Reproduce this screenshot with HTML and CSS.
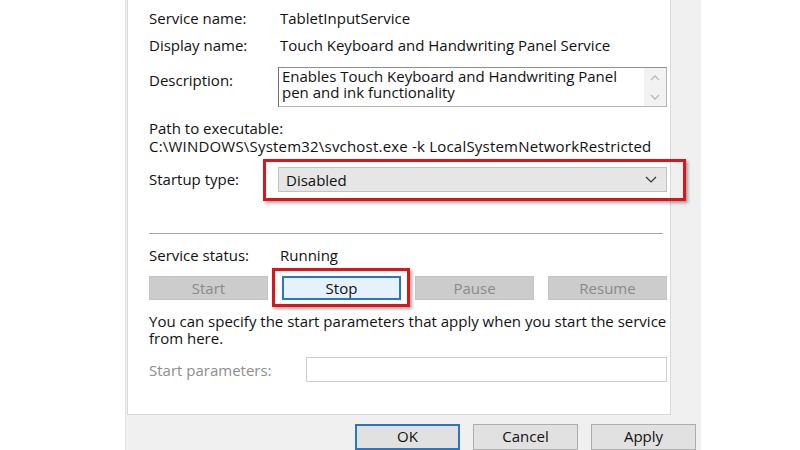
FILE: index.html
```html
<!DOCTYPE html>
<html lang="en">
<head>
    <meta charset="UTF-8">
    <title>Service Properties</title>
    <link rel="stylesheet" href="styles.css">
</head>
<body>
    <div class="dialog">
        <div class="panel">
            <div class="row">
                <span class="label">Service name:</span>
                <span>TabletInputService</span>
            </div>
            <div class="row">
                <span class="label">Display name:</span>
                <span>Touch Keyboard and Handwriting Panel Service</span>
            </div>
            <div class="row desc-row">
                <span class="label">Description:</span>
                <div class="textbox">
                    <div class="textbox-text">Enables Touch Keyboard and Handwriting Panel pen and ink functionality</div>
                    <div class="scrollbar">
                        <svg width="10" height="6" viewBox="0 0 10 6"><path d="M1 5 L5 1 L9 5" fill="none" stroke="#b8b8b8" stroke-width="1.3"/></svg>
                        <svg width="10" height="6" viewBox="0 0 10 6"><path d="M1 1 L5 5 L9 1" fill="none" stroke="#b8b8b8" stroke-width="1.3"/></svg>
                    </div>
                </div>
            </div>
            <div class="path-label">Path to executable:</div>
            <div class="path-value">C:\WINDOWS\System32\svchost.exe -k LocalSystemNetworkRestricted</div>
            <div class="row startup-row">
                <span class="label">Startup type:</span>
                <div class="dropdown">
                    <span>Disabled</span>
                    <svg width="12" height="7" viewBox="0 0 12 7"><path d="M1 1 L6 6 L11 1" fill="none" stroke="#333" stroke-width="1.2"/></svg>
                    <div class="highlight highlight-dropdown"></div>
                </div>
            </div>
            <div class="separator"></div>
            <div class="row status-row">
                <span class="label">Service status:</span>
                <span>Running</span>
            </div>
            <div class="buttons">
                <button class="btn disabled">Start</button>
                <button class="btn focused">Stop<span class="highlight highlight-stop"></span></button>
                <button class="btn disabled">Pause</button>
                <button class="btn disabled">Resume</button>
            </div>
            <p class="hint">You can specify the start parameters that apply when you start the service from here.</p>
            <div class="row params-row">
                <span class="label params-label">Start parameters:</span>
                <div class="params-input"></div>
            </div>
        </div>
        <div class="footer">
            <button class="btn footer-btn default">OK</button>
            <button class="btn footer-btn">Cancel</button>
            <button class="btn footer-btn">Apply</button>
        </div>
    </div>
</body>
</html>
```

FILE: styles.css
```css
body {
    margin: 0;
    background-color: #fff;
    font-family: "Open Sans", "Noto Sans", Arial, sans-serif;
    font-size: 15px;
    color: #111;
}
.dialog {
    margin-left: 125px;
    width: 575px;
    height: 450px;
    overflow: hidden;
    background-color: #f0f0f0;
    border-left: 1px solid #e2e2e2;
}
.panel {
    margin-left: 1px;
    width: 544px;
    height: 415px;
    padding-left: 21px;
    background-color: #fff;
    border: 1px solid #d9d9d9;
    border-top: none;
    box-sizing: border-box;
    padding-top: 4px;
}
.row {
    display: flex;
    align-items: center;
    height: 27px;
}
.label {
    width: 131px;
    flex-shrink: 0;
}
.desc-row {
    align-items: flex-start;
    height: 40px;
    margin-top: 9px;
}
.desc-row .label {
    padding-top: 3px;
}
.textbox {
    display: flex;
    width: 389px;
    height: 40px;
    margin-left: -2px;
    border: 1px solid #b5b5b5;
    border-top-color: #8f8f8f;
    border-left-color: #6f6f6f;
    box-sizing: border-box;
}
.textbox-text {
    flex: 1;
    padding: 0 20px 0 3px;
    line-height: 16px;
}
.scrollbar {
    width: 22px;
    background-color: #f2f2f2;
    display: flex;
    flex-direction: column;
    align-items: center;
    justify-content: space-around;
}
.path-label {
    margin-top: 12px;
    line-height: 18px;
}
.path-value {
    line-height: 18px;
    letter-spacing: 0.2px;
}
.startup-row {
    height: 25px;
    margin-top: 12px;
}
.startup-row .label {
    margin-top: -1px;
}
.dropdown {
    position: relative;
    display: flex;
    align-items: center;
    justify-content: space-between;
    width: 389px;
    height: 25px;
    margin-left: -2px;
    padding: 0 9px 0 7px;
    box-sizing: border-box;
    background-color: #e6e6e6;
    border: 1px solid #c2c2c2;
}
.highlight {
    position: absolute;
    border: 3px solid #d8161c;
    box-shadow: 2px 2px 3px rgba(0, 0, 0, 0.35);
    pointer-events: none;
}
.highlight-dropdown {
    left: -16px;
    right: -20px;
    top: -9px;
    bottom: -10px;
}
.separator {
    width: 514px;
    height: 1px;
    margin-top: 41px;
    background-color: #a8a8a8;
}
.status-row {
    height: 18px;
    margin-top: 12px;
}
.buttons {
    display: grid;
    grid-template-columns: repeat(4, 119px);
    column-gap: 14px;
    margin-top: 12px;
}
.btn {
    position: relative;
    height: 24px;
    font-family: inherit;
    font-size: 15px;
    color: #111;
    background-color: #e1e1e1;
    border: 1px solid #adadad;
    padding: 0;
}
.btn.disabled {
    background-color: #cccccc;
    border-color: #c4c4c4;
    color: #8a8a8a;
}
.btn.focused {
    background-color: #e5f1fb;
    border: 2px solid #2a76c0;
}
.btn.default {
    border: 2px solid #2a76c0;
}
.highlight-stop {
    left: -12px;
    right: -11px;
    top: -10px;
    bottom: -9px;
}
.hint {
    margin: 13px 0 0;
    width: 520px;
    line-height: 17px;
}
.params-row {
    height: 25px;
    margin-top: 10px;
}
.params-label {
    width: 157px;
    color: #8d8d8d;
}
.params-input {
    width: 361px;
    height: 25px;
    border: 1px solid #cfcfcf;
    box-sizing: border-box;
}
.footer {
    display: flex;
    gap: 13px;
    padding: 9px 0 0 229px;
}
.footer-btn {
    width: 105px;
    height: 26px;
    padding-bottom: 2px;
}
```
